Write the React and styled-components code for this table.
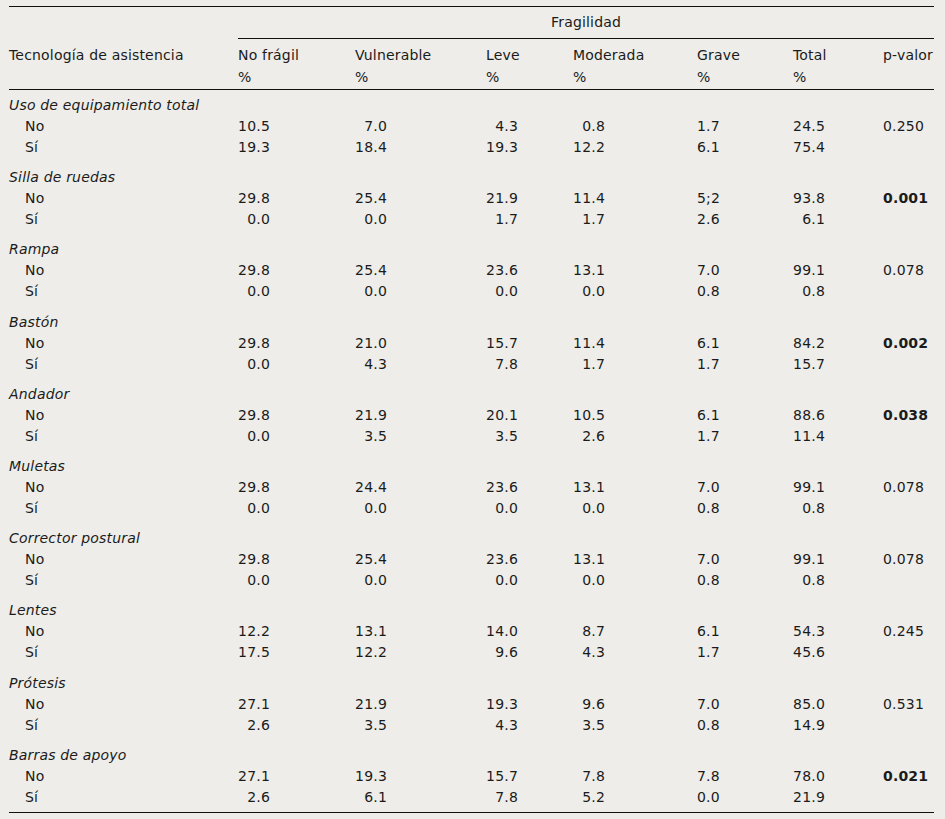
import React from "react";
import styled, { createGlobalStyle } from "styled-components";

const GlobalStyle = createGlobalStyle`
  html, body {
    margin: 0;
    background: #eeede9;
  }
  body {
    font-family: "DejaVu Sans", "Liberation Sans", sans-serif;
    font-size: 14px;
    color: #1b1b1b;
    letter-spacing: 0.18px;
  }
`;

const Page = styled.div`
  padding: 6px 11px 0 9px;
`;

const Table = styled.table`
  width: 925px;
  border-collapse: collapse;
  table-layout: fixed;
  white-space: nowrap;
`;

const Col = styled.col`
  width: ${(p) => p.$w}px;
`;

const HeadCell = styled.th`
  font-weight: normal;
  text-align: ${(p) => (p.$center ? "center" : "left")};
  vertical-align: top;
  padding: 0;
  line-height: 22px;
  border-top: ${(p) => (p.$top ? "1px solid #111" : "none")};
  border-bottom: ${(p) => (p.$under ? "1px solid #111" : "none")};
`;

const SpanRow = styled.tr`
  th {
    padding-top: 4px;
    padding-bottom: 5px;
    line-height: 22px;
  }
`;

const ColRow = styled.tr`
  th {
    padding-top: 5px;
    padding-bottom: 1px;
  }
`;

const Row = styled.tr`
  td {
    padding: ${(p) => (p.$first ? "5px" : p.$group ? "9.2px" : "0")} 0
      ${(p) => (p.$last ? "4px" : "0")} 0;
    border-bottom: ${(p) => (p.$last ? "1px solid #111" : "none")};
  }
`;

const Cell = styled.td`
  line-height: 21px;
  vertical-align: top;
`;

const GroupLabel = styled(Cell)`
  font-style: italic;
`;

const SubLabel = styled(Cell)`
  padding-left: 16px !important;
`;

const Num = styled.span`
  display: inline-block;
  min-width: ${(p) => (p.$pad ? "32px" : "0")};
  text-align: right;
  font-weight: ${(p) => (p.$bold ? "bold" : "normal")};
`;

const widths = [229, 117, 131, 87, 124, 96, 90, 51];
const padded = [true, true, true, true, false, true, false];

const heads = ["No frágil", "Vulnerable", "Leve", "Moderada", "Grave", "Total"];

const groups = [
  ["Uso de equipamiento total", ["10.5", "7.0", "4.3", "0.8", "1.7", "24.5"], ["19.3", "18.4", "19.3", "12.2", "6.1", "75.4"], "0.250", false],
  ["Silla de ruedas", ["29.8", "25.4", "21.9", "11.4", "5;2", "93.8"], ["0.0", "0.0", "1.7", "1.7", "2.6", "6.1"], "0.001", true],
  ["Rampa", ["29.8", "25.4", "23.6", "13.1", "7.0", "99.1"], ["0.0", "0.0", "0.0", "0.0", "0.8", "0.8"], "0.078", false],
  ["Bastón", ["29.8", "21.0", "15.7", "11.4", "6.1", "84.2"], ["0.0", "4.3", "7.8", "1.7", "1.7", "15.7"], "0.002", true],
  ["Andador", ["29.8", "21.9", "20.1", "10.5", "6.1", "88.6"], ["0.0", "3.5", "3.5", "2.6", "1.7", "11.4"], "0.038", true],
  ["Muletas", ["29.8", "24.4", "23.6", "13.1", "7.0", "99.1"], ["0.0", "0.0", "0.0", "0.0", "0.8", "0.8"], "0.078", false],
  ["Corrector postural", ["29.8", "25.4", "23.6", "13.1", "7.0", "99.1"], ["0.0", "0.0", "0.0", "0.0", "0.8", "0.8"], "0.078", false],
  ["Lentes", ["12.2", "13.1", "14.0", "8.7", "6.1", "54.3"], ["17.5", "12.2", "9.6", "4.3", "1.7", "45.6"], "0.245", false],
  ["Prótesis", ["27.1", "21.9", "19.3", "9.6", "7.0", "85.0"], ["2.6", "3.5", "4.3", "3.5", "0.8", "14.9"], "0.531", false],
  ["Barras de apoyo", ["27.1", "19.3", "15.7", "7.8", "7.8", "78.0"], ["2.6", "6.1", "7.8", "5.2", "0.0", "21.9"], "0.021", true],
];

const DataRow = ({ label, values, p, bold, last }) => (
  <Row $last={last}>
    <SubLabel>{label}</SubLabel>
    {values.map((v, i) => (
      <Cell key={i}>
        <Num $pad={padded[i]}>{v}</Num>
      </Cell>
    ))}
    <Cell>{p && <Num $bold={bold}>{p}</Num>}</Cell>
  </Row>
);

export default function App() {
  return (
    <>
      <GlobalStyle />
      <Page>
        <Table>
          <colgroup>
            {widths.map((w, i) => (
              <Col key={i} $w={w} />
            ))}
          </colgroup>
          <thead>
            <SpanRow>
              <HeadCell $top />
              <HeadCell $top $under $center colSpan={7}>
                Fragilidad
              </HeadCell>
            </SpanRow>
            <ColRow>
              <HeadCell $under>Tecnología de asistencia</HeadCell>
              {heads.map((h) => (
                <HeadCell key={h} $under>
                  {h}
                  <br />%
                </HeadCell>
              ))}
              <HeadCell $under>p-valor</HeadCell>
            </ColRow>
          </thead>
          <tbody>
            {groups.map(([name, no, si, p, bold], gi) => (
              <React.Fragment key={name}>
                <Row $group $first={gi === 0}>
                  <GroupLabel colSpan={8}>{name}</GroupLabel>
                </Row>
                <DataRow label="No" values={no} p={p} bold={bold} />
                <DataRow label="Sí" values={si} last={gi === groups.length - 1} />
              </React.Fragment>
            ))}
          </tbody>
        </Table>
      </Page>
    </>
  );
}
